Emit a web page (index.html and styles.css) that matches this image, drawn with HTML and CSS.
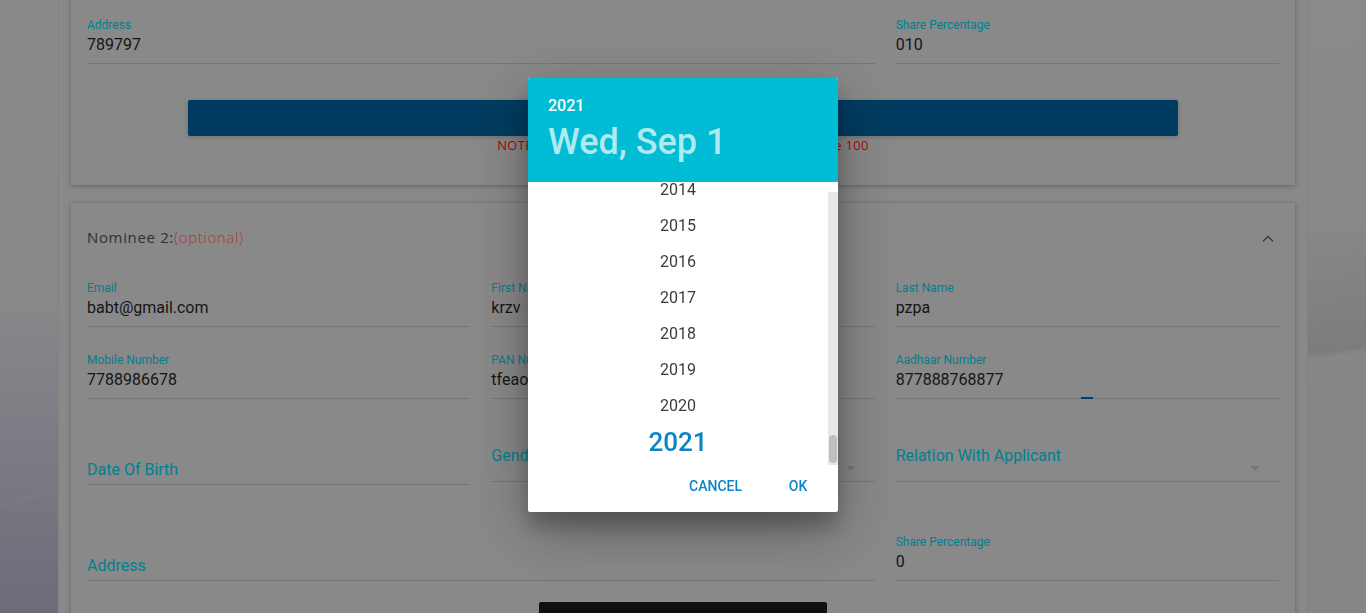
FILE: index.html
```html
<!DOCTYPE html>
<html lang="en">
<head>
<meta charset="utf-8">
<title>Nominee Details</title>
<link rel="stylesheet" href="styles.css">
</head>
<body>
<div class="page">
  <section class="card card-first">
    <div class="grid">
      <div class="field span2"><span class="flabel">Address</span><span class="fvalue">789797</span></div>
      <div class="field"><span class="flabel">Share Percentage</span><span class="fvalue">010</span></div>
    </div>
    <button class="btn-primary" type="button">SAVE</button>
    <p class="note">NOTE: Total of all nominees share percentage must be 100</p>
  </section>

  <section class="card card-second">
    <div class="card-head">
      <h3 class="title">Nominee 2:<span class="optional">(optional)</span></h3>
      <svg class="chev" width="24" height="24" viewBox="0 0 24 24"><path d="M12 8.6l-5.4 5.4.8.8 4.6-4.6 4.6 4.6.8-.8z" fill="#494949"/></svg>
    </div>
    <div class="grid">
      <div class="field r1"><span class="flabel">Email</span><span class="fvalue">babt@gmail.com</span></div>
      <div class="field r1"><span class="flabel">First Name</span><span class="fvalue">krzv</span></div>
      <div class="field r1"><span class="flabel">Last Name</span><span class="fvalue">pzpa</span></div>

      <div class="field r2"><span class="flabel">Mobile Number</span><span class="fvalue">7788986678</span></div>
      <div class="field r2"><span class="flabel">PAN Number</span><span class="fvalue">tfeao1234k</span></div>
      <div class="field r2"><span class="flabel">Aadhaar Number</span><span class="fvalue">877888768877</span><span class="focus-bar"></span></div>

      <div class="field empty r3"><span class="plabel">Date Of Birth</span></div>
      <div class="field select r3"><span class="plabel">Gender</span><span class="arrow"></span></div>
      <div class="field select r3"><span class="plabel">Relation With Applicant</span><span class="arrow"></span></div>

      <div class="field empty span2 r4"><span class="plabel">Address</span></div>
      <div class="field r4"><span class="flabel">Share Percentage</span><span class="fvalue">0</span></div>
    </div>
    <button class="btn-dark" type="button">SUBMIT</button>
  </section>
</div>

<div class="overlay">
  <div class="dialog">
    <div class="dhead">
      <div class="dyear">2021</div>
      <div class="ddate">Wed, Sep 1</div>
    </div>
    <div class="dbody">
      <div class="years">
        <div class="years-inner">
          <div class="year">2014</div>
          <div class="year">2015</div>
          <div class="year">2016</div>
          <div class="year">2017</div>
          <div class="year">2018</div>
          <div class="year">2019</div>
          <div class="year">2020</div>
          <div class="year sel">2021</div>
        </div>
      </div>
      <div class="scroll"><div class="track"><div class="thumb"></div></div></div>
    </div>
    <div class="dactions">
      <button class="dbtn" type="button">CANCEL</button>
      <button class="dbtn" type="button">OK</button>
    </div>
  </div>
</div>
</body>
</html>
```
FILE: styles.css
```css
* { box-sizing: border-box; }
html, body { height: 100%; }
body {
  margin: 0;
  overflow: hidden;
  font-family: Roboto, "Liberation Sans", sans-serif;
  background-color: #c4c4c4;
  background-image:
    linear-gradient(163deg, transparent 80%, rgba(255,255,255,0.07) 80.3%, transparent 80.8%),
    linear-gradient(180deg, #c5c5c5 0%, #c3c3c6 50%, #aeacbb 78%, #9c9aad 100%),
    linear-gradient(172deg, #c6c6c6 0%, #c4c4c4 36%, #b4b4b4 55%, #b2b2b2 57%, #c2c2c2 58%, #c0c0c0 100%);
  background-repeat: no-repeat;
  background-size: 58px 100%, 58px 100%, 58px 100%;
  background-position: left top, left top, right top;
}

.page {
  width: 1250px;
  min-height: 100%;
  margin: 0 auto;
  padding: 0 12px;
  background: #c4c4c4;
  border-left: 1px solid #bababa;
  border-right: 1px solid #bababa;
}

.card {
  background: #c4c4c4;
  padding: 0 16px;
  box-shadow: 0 1px 6px rgba(0,0,0,0.12), 0 1px 4px rgba(0,0,0,0.18);
}
.card-first {
  margin-top: -8px;
  padding-bottom: 31px;
}
.card-second {
  margin-top: 18px;
  padding-top: 24px;
  padding-bottom: 20px;
}

.grid {
  display: grid;
  grid-template-columns: repeat(3, 1fr);
  column-gap: 21px;
  grid-auto-rows: 72px;
}
.card-second .grid { grid-template-rows: 72px 72px 86px 96px; }
.span2 { grid-column: span 2; }

.field {
  position: relative;
  display: flex;
  flex-direction: column;
  justify-content: flex-end;
  padding-bottom: 6px;
  border-bottom: 1px solid #a9a9a9;
}
.flabel {
  font-size: 12px;
  line-height: 16px;
  color: #00b8cf;
}
.fvalue {
  font-size: 16px;
  line-height: 24px;
  color: #1f1f1f;
}
.plabel {
  font-size: 16px;
  line-height: 24px;
  color: #00b8cf;
}
.field.empty { padding-bottom: 2px; }
.field.select {
  flex-direction: row;
  justify-content: space-between;
  align-items: flex-end;
  padding-bottom: 13px;
  margin-bottom: 3px;
}
.arrow {
  width: 0;
  height: 0;
  border-left: 5px solid transparent;
  border-right: 5px solid transparent;
  border-top: 5px solid #a9a9a9;
  margin-right: 19px;
  margin-bottom: -3px;
}
.focus-bar {
  position: absolute;
  left: 185px;
  bottom: -1px;
  width: 12px;
  height: 2px;
  background: #005b9c;
}

.btn-primary {
  display: block;
  width: 990px;
  height: 36px;
  margin: 36px auto 0;
  border: 0;
  border-radius: 2px;
  background: #00568b;
  color: #fff;
  font-family: Roboto, sans-serif;
  font-size: 14px;
  font-weight: 500;
  box-shadow: 0 1px 4px rgba(0,0,0,0.2);
}
.note {
  margin: 0;
  text-align: center;
  font-family: "Open Sans", "Liberation Sans", sans-serif;
  font-size: 13px;
  line-height: 18px;
  letter-spacing: 0.3px;
  color: #ff0000;
}

.card-head {
  display: flex;
  justify-content: space-between;
  align-items: center;
  height: 20px;
  margin-bottom: 8px;
}
.title {
  margin: 0;
  font-family: "Open Sans", "Liberation Sans", sans-serif;
  font-size: 15px;
  font-weight: 400;
  line-height: 20px;
  color: #474747;
  letter-spacing: 0.65px;
}
.optional {
  color: #ea5450;
  font-weight: 300;
}
.chev { margin-right: -1px; margin-top: 4px; }

.btn-dark {
  display: block;
  width: 288px;
  height: 36px;
  margin: 21px auto 0;
  border: 0;
  border-radius: 2px;
  background: #181818;
  color: #fff;
  font-family: Roboto, sans-serif;
  font-size: 14px;
}

.overlay {
  position: fixed;
  inset: 0;
  background: rgba(0,0,0,0.3);
  display: flex;
  justify-content: center;
  align-items: flex-start;
  padding-top: 78px;
}
.dialog {
  width: 310px;
  background: #fff;
  border-radius: 2px;
  overflow: hidden;
  font-family: Roboto, sans-serif;
  box-shadow: 0 19px 60px rgba(0,0,0,0.3), 0 15px 20px rgba(0,0,0,0.22);
}
.dhead {
  height: 104px;
  padding: 18px 20px 0;
  background: #00bcd4;
  color: #fff;
}
.dyear {
  font-size: 16px;
  line-height: 20px;
  font-weight: 500;
}
.ddate {
  margin-top: 8px;
  font-size: 36px;
  line-height: 36px;
  font-weight: 500;
  color: rgba(255,255,255,0.7);
}
.dbody {
  display: flex;
  height: 283px;
}
.years {
  width: 300px;
  overflow: hidden;
}
.years-inner { margin-top: -10px; }
.year {
  height: 36px;
  line-height: 36px;
  text-align: center;
  font-size: 16px;
  color: rgba(0,0,0,0.78);
}
.year.sel {
  font-size: 26px;
  font-weight: 500;
  color: #0a84c8;
}
.scroll {
  width: 10px;
  padding-top: 10px;
  display: flex;
  flex-direction: column;
}
.track {
  flex: 1;
  background: #e7e7e7;
  display: flex;
  flex-direction: column;
  justify-content: flex-end;
  align-items: center;
  padding-bottom: 2px;
}
.thumb {
  width: 8px;
  height: 28px;
  border-radius: 4px;
  background: #bfbfbf;
}
.dactions {
  display: flex;
  justify-content: flex-end;
  gap: 8px;
  padding: 3px 8px 8px;
}
.dbtn {
  min-width: 64px;
  height: 36px;
  padding: 0 16px;
  border: 0;
  background: transparent;
  font-family: Roboto, sans-serif;
  font-size: 14px;
  font-weight: 500;
  color: #0a84c8;
}
```
